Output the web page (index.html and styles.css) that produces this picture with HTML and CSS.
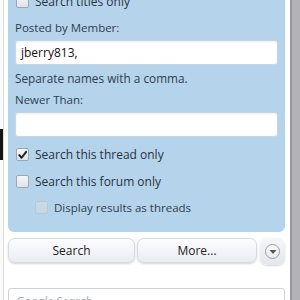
FILE: index.html
```html
<!DOCTYPE html>
<html>
<head>
<meta charset="utf-8">
<link rel="stylesheet" href="styles.css">
</head>
<body>
<div class="page">
  <div class="left-edge"><div class="dark-bar"></div></div>
  <div class="popup">
    <div class="panel">
      <label class="check-row first"><span class="box"></span><span>Search titles only</span></label>
      <div class="label posted">Posted by Member:</div>
      <div class="input"><span>jberry813,</span></div>
      <div class="hint">Separate names with a comma.</div>
      <div class="label newer">Newer Than:</div>
      <div class="input empty"></div>
      <label class="check-row thread"><span class="box checked"><svg viewBox="0 0 12 12" width="12" height="12"><path d="M2.5 6.2 L5 9 L10 2.5" fill="none" stroke="#222" stroke-width="2.2" stroke-linecap="round" stroke-linejoin="round"/></svg></span><span>Search this thread only</span></label>
      <label class="check-row forum"><span class="box"></span><span>Search this forum only</span></label>
      <label class="check-row sub"><span class="box disabled"></span><span>Display results as threads</span></label>
    </div>
    <div class="buttons">
      <div class="btn search">Search</div>
      <div class="btn more">More...</div>
      <div class="drop"><span class="circle"><svg viewBox="0 0 8 6" width="8" height="6"><path d="M0.5 1 L7.5 1 L4 5 Z" fill="#555"/></svg></span></div>
    </div>
    <div class="google">Google Search</div>
  </div>
  <div class="right-edge"></div>
</div>
</body>
</html>
```
FILE: styles.css
```css
html, body {
  margin: 0;
  padding: 0;
  width: 300px;
  height: 300px;
  overflow: hidden;
  background: #fff;
}
.page {
  display: flex;
  height: 300px;
  font-family: "Open Sans", "Noto Sans", sans-serif;
  font-size: 11.5px;
  color: #2f3e50;
}
.left-edge {
  width: 3px;
  flex: none;
  background: #fafafa;
}
.dark-bar {
  margin-top: 129px;
  height: 31px;
  background: #151515;
}
.popup {
  width: 277px;
  flex: none;
  border-left: 1px solid #dcdcdc;
  background: #fff;
  padding: 0 5px 0 4px;
}
.right-edge {
  flex: 1;
  background: #b3b3b7;
  border-left: 2px solid #98989c;
}
.panel {
  background: #b5d3eb;
  border-radius: 0 0 6px 6px;
  padding: 0 7px 16px 7px;
  margin-top: -6px;
}
.check-row {
  display: flex;
  align-items: flex-start;
  gap: 6px;
  line-height: 16px;
  height: 16px;
  font-size: 12px;
  color: #27333f;
}
.box {
  width: 11px;
  height: 11px;
  margin-left: 1px;
  margin-top: 1px;
  flex: none;
  border: 1px solid #9aa7b4;
  border-radius: 2px;
  background: linear-gradient(#f4f6f8, #dfe4ea);
  display: flex;
  align-items: center;
  justify-content: center;
}
.box svg { display: block; }
.box.disabled {
  border-color: #b9c7d3;
  background: linear-gradient(#c9dbe9, #c2d6e6);
}
.label, .hint {
  line-height: 16px;
  height: 16px;
}
.hint { font-size: 11.8px; }
.posted { margin-top: 10px; }
.input {
  margin-top: 4px;
  height: 25px;
  box-sizing: border-box;
  background: #fff;
  border: 1px solid #c4d6e4;
  border-radius: 3px;
  box-shadow: inset 0 1px 2px rgba(0,0,0,0.08);
  padding: 0 5px;
  line-height: 23px;
  color: #111;
  font-size: 12px;
}
.hint { margin-top: 5px; }
.newer { margin-top: 6px; }
.input.empty { margin-top: 4px; }
.thread { margin-top: 10px; }
.forum { margin-top: 11px; }
.sub { margin-top: 10px; padding-left: 19px; font-size: 11.5px; color: #2f3e50; }
.buttons {
  display: flex;
  margin-top: 6px;
  height: 27px;
  align-items: flex-start;
}
.btn {
  height: 25px;
  box-sizing: border-box;
  border: 1px solid #d6dbe3;
  border-radius: 7px;
  background: linear-gradient(#fdfdfe, #e9ecf2);
  box-shadow: 0 1px 2px rgba(0,0,0,0.18);
  text-align: center;
  line-height: 23px;
  font-size: 12px;
  color: #222;
}
.search { width: 127px; }
.more { width: 120px; margin-left: 2px; }
.drop {
  margin-left: 3px;
  width: 25px;
  height: 27px;
  box-sizing: border-box;
  border-radius: 7px;
  background: linear-gradient(#f5f6f8, #e4e6ea);
  box-shadow: 0 1px 2px rgba(0,0,0,0.15);
  display: flex;
  align-items: center;
  justify-content: center;
}
.circle {
  width: 15px;
  height: 15px;
  box-sizing: border-box;
  border: 1px solid #9a9da3;
  border-radius: 50%;
  background: linear-gradient(#fbfbfc, #e9ebee);
  display: flex;
  align-items: center;
  justify-content: center;
}
.circle svg { display: block; margin-top: 1px; }
.google {
  margin-top: 23px;
  height: 30px;
  box-sizing: border-box;
  border: 1px solid #cfd4da;
  border-radius: 3px;
  padding: 4px 7px;
  font-style: italic;
  color: #a7adb4;
  font-size: 12px;
}
```
